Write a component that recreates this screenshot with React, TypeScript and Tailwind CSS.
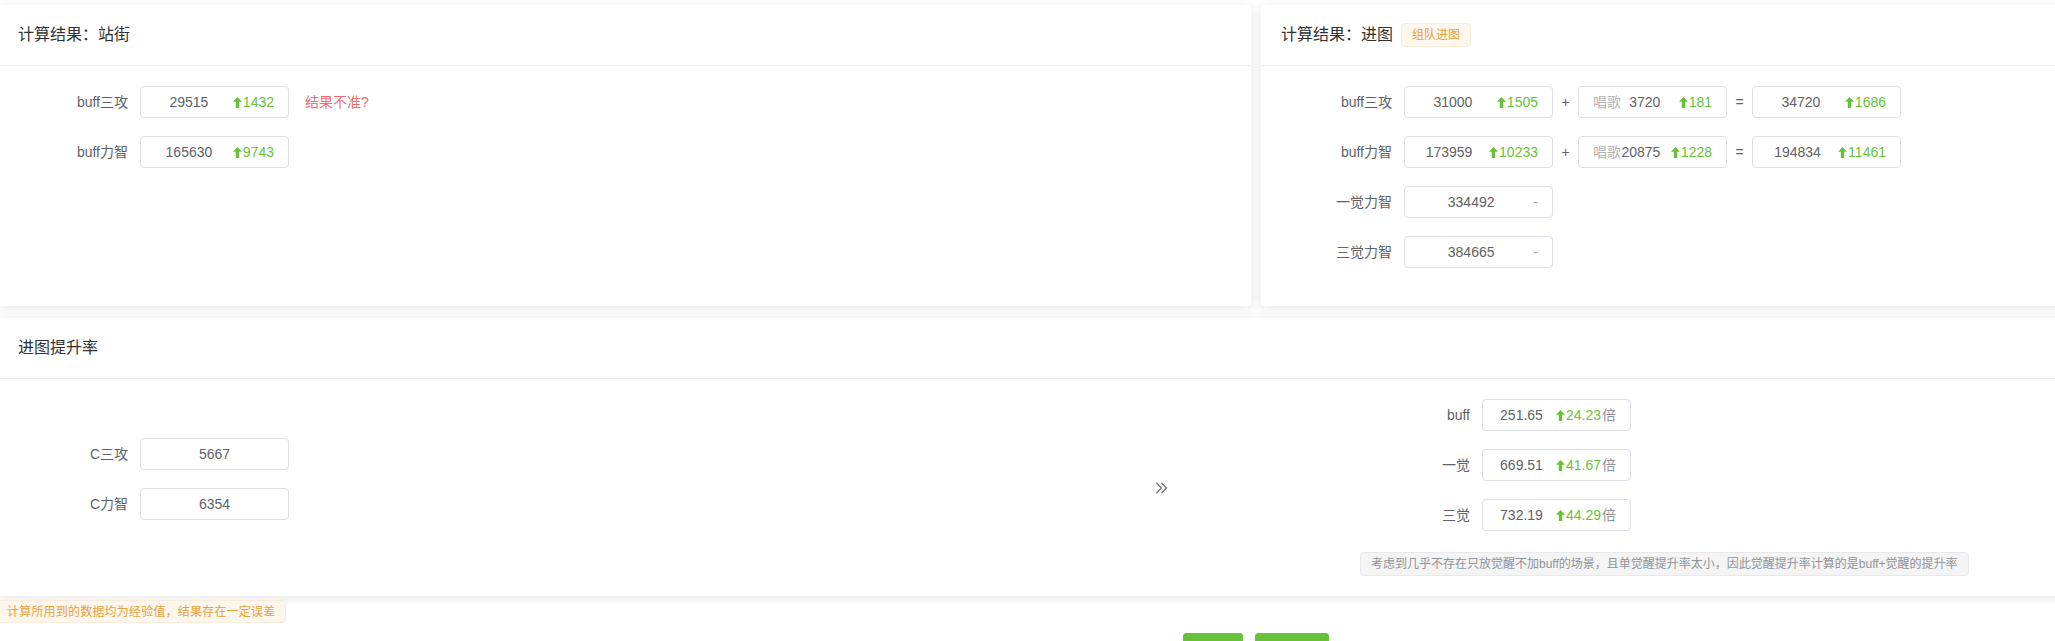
import type { ReactNode } from 'react'

const text = 'text-[#606266]'

function UpArrow() {
  return (
    <svg width="9" height="11" viewBox="0 0 9 11" className="shrink-0">
      <path d="M4.5 0 9 4.8H6.2V11H2.8V4.8H0Z" fill="#67c23a" />
    </svg>
  )
}

function DoubleRight() {
  return (
    <svg width="13" height="12" viewBox="0 0 13 12" fill="none" stroke="#606266" strokeWidth="1.1">
      <path d="M1.5 1 6.5 6l-5 5" />
      <path d="M6.5 1l5 5-5 5" />
    </svg>
  )
}

type FieldProps = {
  value: string
  rise?: string
  unit?: string
  prefix?: string
  dash?: boolean
}

function Field({ value, rise, unit, prefix, dash }: FieldProps) {
  return (
    <div
      className={`flex h-8 w-[149px] shrink-0 items-center rounded border border-[#dcdfe6] bg-white px-[14px] text-sm ${text}`}
    >
      {prefix && <span className="text-[#b1b3b8]">{prefix}</span>}
      <span className="flex-1 whitespace-nowrap text-center">{value}</span>
      {rise && (
        <span className="ml-2.5 flex items-center gap-px whitespace-nowrap text-[#67c23a]">
          <UpArrow />
          {rise}
          {unit && <span className="text-[#909399]">{unit}</span>}
        </span>
      )}
      {dash && <span className="ml-2.5 text-[#a8abb2]">-</span>}
    </div>
  )
}

function Row({ label, labelW = 'w-[122px]', children }: { label: string; labelW?: string; children: ReactNode }) {
  return (
    <div className="mb-[18px] flex h-8 items-center">
      <label className={`${labelW} shrink-0 pr-3 text-right text-sm ${text}`}>{label}</label>
      {children}
    </div>
  )
}

function Sep({ children }: { children: ReactNode }) {
  return <span className={`w-[25px] shrink-0 text-center text-sm ${text}`}>{children}</span>
}

function Card({ title, extra, children, className = '' }: { title: string; extra?: ReactNode; children: ReactNode; className?: string }) {
  return (
    <div className={`rounded bg-white shadow-[0_2px_12px_0_rgba(0,0,0,0.1)] ${className}`}>
      <div className="flex items-center border-b border-[#ebeef5] px-5 py-[18px]">
        <span className="text-base leading-6 text-[#303133]">{title}</span>
        {extra}
      </div>
      <div className="p-5">{children}</div>
    </div>
  )
}

export default function App() {
  return (
    <div className="h-screen w-full overflow-hidden bg-white font-['Liberation_Sans','Noto_Sans_CJK_SC',sans-serif]">
      <div className="ml-[-2px] w-[2516px] pt-[5px]">
        <div className="grid grid-cols-2 gap-[10px]">
          <Card title="计算结果：站街">
            <Row label="buff三攻">
              <Field value="29515" rise="1432" />
              <span className="ml-4 text-sm text-[#f56c6c]">结果不准?</span>
            </Row>
            <Row label="buff力智">
              <Field value="165630" rise="9743" />
            </Row>
          </Card>

          <Card
            title="计算结果：进图"
            extra={
              <span className="ml-2 inline-flex h-6 items-center rounded border border-[#faecd8] bg-[#fdf6ec] px-2.5 text-xs text-[#e6a23c]">
                组队进图
              </span>
            }
          >
            <Row label="buff三攻" labelW="w-[123px]">
              <Field value="31000" rise="1505" />
              <Sep>+</Sep>
              <Field prefix="唱歌" value="3720" rise="181" />
              <Sep>=</Sep>
              <Field value="34720" rise="1686" />
            </Row>
            <Row label="buff力智" labelW="w-[123px]">
              <Field value="173959" rise="10233" />
              <Sep>+</Sep>
              <Field prefix="唱歌" value="20875" rise="1228" />
              <Sep>=</Sep>
              <Field value="194834" rise="11461" />
            </Row>
            <Row label="一觉力智" labelW="w-[123px]">
              <Field value="334492" dash />
            </Row>
            <Row label="三觉力智" labelW="w-[123px]">
              <Field value="384665" dash />
            </Row>
          </Card>
        </div>

        <Card title="进图提升率" className="mt-3">
          <div className="flex items-center">
            <div className="w-[944px] shrink-0">
              <Row label="C三攻">
                <Field value="5667" />
              </Row>
              <Row label="C力智">
                <Field value="6354" />
              </Row>
            </div>
            <div className="flex w-[398px] shrink-0 justify-center">
              <DoubleRight />
            </div>
            <div>
              <Row label="buff">
                <Field value="251.65" rise="24.23" unit="倍" />
              </Row>
              <Row label="一觉">
                <Field value="669.51" rise="41.67" unit="倍" />
              </Row>
              <Row label="三觉">
                <Field value="732.19" rise="44.29" unit="倍" />
              </Row>
              <div className="mt-[3px] inline-flex h-6 items-center rounded border border-[#e9e9eb] bg-[#f4f4f5] px-2.5 text-xs whitespace-nowrap text-[#909399]">
                考虑到几乎不存在只放觉醒不加buff的场景，且单觉醒提升率太小，因此觉醒提升率计算的是buff+觉醒的提升率
              </div>
            </div>
          </div>
        </Card>

        <div className="ml-[-2px] mt-1 inline-flex h-[23px] items-center rounded border border-[#faecd8] bg-[#fdf6ec] px-2.5 text-xs tracking-[0.2px] text-[#e6a23c]">
          计算所用到的数据均为经验值，结果存在一定误差
        </div>

        <div className="mt-2.5 flex justify-center gap-3">
          <button className="h-8 rounded-[3px] border border-[#67c23a] bg-[#67c23a] px-[15px] text-sm text-white">计算</button>
          <button className="h-8 rounded-[3px] border border-[#67c23a] bg-[#67c23a] px-[15px] text-sm text-white">重新算</button>
        </div>
      </div>
    </div>
  )
}
